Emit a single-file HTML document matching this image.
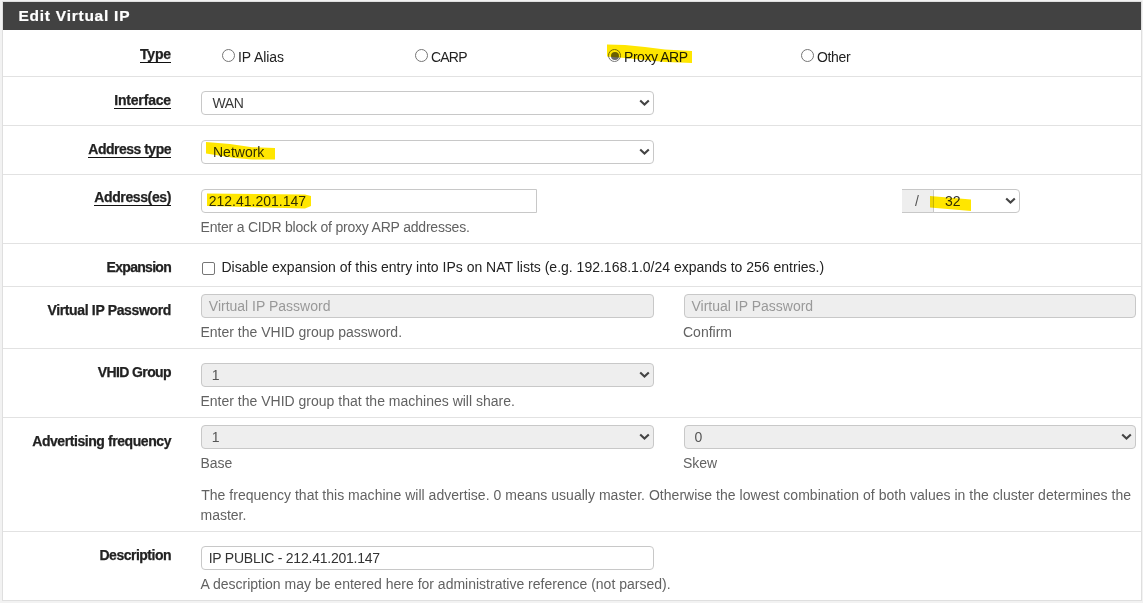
<!DOCTYPE html>
<html><head><meta charset="utf-8"><title>Edit Virtual IP</title>
<style>
html,body{margin:0;padding:0}
body{width:1143px;height:603px;overflow:hidden;background:#f2f2f2;position:relative;font-family:"Liberation Sans", sans-serif}
.t{position:absolute;white-space:nowrap;line-height:20px;font-family:"Liberation Sans", sans-serif}
.b{position:absolute;box-sizing:border-box}
</style></head><body>
<div class="b" style="left:2px;top:1px;width:1140px;height:600px;background:#fff;border:1px solid #dfdfdf"></div>
<div class="b" style="left:3px;top:2px;width:1138px;height:28px;background:#424242"></div>
<div class="t" style="left:18.5px;top:6.03px;font-size:15.5px;font-weight:bold;color:#fff;letter-spacing:0.75px;-webkit-text-stroke:0.2px #fff;">Edit Virtual IP</div>
<div class="b" style="left:3px;top:76px;width:1138px;height:1px;background:#e2e2e2"></div>
<div class="b" style="left:3px;top:125px;width:1138px;height:1px;background:#e2e2e2"></div>
<div class="b" style="left:3px;top:174px;width:1138px;height:1px;background:#e2e2e2"></div>
<div class="b" style="left:3px;top:243px;width:1138px;height:1px;background:#e2e2e2"></div>
<div class="b" style="left:3px;top:286px;width:1138px;height:1px;background:#e2e2e2"></div>
<div class="b" style="left:3px;top:348px;width:1138px;height:1px;background:#e2e2e2"></div>
<div class="b" style="left:3px;top:417px;width:1138px;height:1px;background:#e2e2e2"></div>
<div class="b" style="left:3px;top:531px;width:1138px;height:1px;background:#e2e2e2"></div>
<div class="t" style="left:0;width:171px;text-align:right;top:44.05px;font-size:14px;font-weight:bold;color:#222;letter-spacing:-0.15px;-webkit-text-stroke:0.25px #222"><span style="border-bottom:1px solid #111;padding-bottom:0px">Type</span></div>
<div class="t" style="left:0;width:171px;text-align:right;top:90.45px;font-size:14px;font-weight:bold;color:#222;letter-spacing:-0.17px;-webkit-text-stroke:0.25px #222"><span style="border-bottom:1px solid #111;padding-bottom:0px">Interface</span></div>
<div class="t" style="left:0;width:171px;text-align:right;top:139.15px;font-size:14px;font-weight:bold;color:#222;letter-spacing:-0.5px;-webkit-text-stroke:0.25px #222"><span style="border-bottom:1px solid #111;padding-bottom:0px">Address type</span></div>
<div class="t" style="left:0;width:171px;text-align:right;top:187.45px;font-size:14px;font-weight:bold;color:#222;letter-spacing:-0.38px;-webkit-text-stroke:0.25px #222"><span style="border-bottom:1px solid #111;padding-bottom:0px">Address(es)</span></div>
<div class="t" style="left:0;width:171px;text-align:right;top:257.15px;font-size:14px;font-weight:bold;color:#222;letter-spacing:-0.71px;-webkit-text-stroke:0.25px #222">Expansion</div>
<div class="t" style="left:0;width:171px;text-align:right;top:300.15px;font-size:14px;font-weight:bold;color:#222;letter-spacing:-0.35px;-webkit-text-stroke:0.25px #222">Virtual IP Password</div>
<div class="t" style="left:0;width:171px;text-align:right;top:362.35px;font-size:14px;font-weight:bold;color:#222;letter-spacing:-0.61px;-webkit-text-stroke:0.25px #222">VHID Group</div>
<div class="t" style="left:0;width:171px;text-align:right;top:431.15px;font-size:14px;font-weight:bold;color:#222;letter-spacing:-0.43px;-webkit-text-stroke:0.25px #222">Advertising frequency</div>
<div class="t" style="left:0;width:171px;text-align:right;top:545.05px;font-size:14px;font-weight:bold;color:#222;letter-spacing:-0.5px;-webkit-text-stroke:0.25px #222">Description</div>
<div class="b" style="left:222px;top:49px;width:13px;height:13px;border:1px solid #767676;border-radius:50%;background:#fff"></div>
<div class="t" style="left:238px;top:46.85px;font-size:14px;font-weight:normal;color:#222;letter-spacing:-0.05px;">IP Alias</div>
<div class="b" style="left:415px;top:49px;width:13px;height:13px;border:1px solid #767676;border-radius:50%;background:#fff"></div>
<div class="t" style="left:431px;top:46.85px;font-size:14px;font-weight:normal;color:#222;letter-spacing:-0.8px;">CARP</div>
<div class="b" style="left:608px;top:49px;width:13px;height:13px;border:1px solid #767676;border-radius:50%;background:#fff"></div><div class="b" style="left:610.5px;top:51.5px;width:8px;height:8px;border-radius:50%;background:#6b6b6b"></div>
<div class="t" style="left:624px;top:46.85px;font-size:14px;font-weight:normal;color:#222;letter-spacing:-0.45px;">Proxy ARP</div>
<div class="b" style="left:801px;top:49px;width:13px;height:13px;border:1px solid #767676;border-radius:50%;background:#fff"></div>
<div class="t" style="left:817px;top:46.85px;font-size:14px;font-weight:normal;color:#222;letter-spacing:-0.35px;">Other</div>
<div class="b" style="left:201px;top:91px;width:453px;height:24px;background:#fff;border:1px solid #c8c8c8;border-radius:4px;"></div>
<div class="t" style="left:212.5px;top:92.95px;font-size:14px;font-weight:normal;color:#3a3a3a;letter-spacing:-0.45px;">WAN</div>
<svg class="b" style="left:638.90px;top:98.70px" width="11" height="8" viewBox="0 0 11 8"><path d="M1.2 1.4 L5.5 5.5 L9.8 1.4" fill="none" stroke="#444" stroke-width="2.1" stroke-linecap="butt"/></svg>
<div class="b" style="left:201px;top:140px;width:453px;height:24px;background:#fff;border:1px solid #c8c8c8;border-radius:4px;"></div>
<div class="t" style="left:213px;top:141.85px;font-size:14px;font-weight:normal;color:#333;letter-spacing:0px;">Network</div>
<svg class="b" style="left:638.90px;top:147.70px" width="11" height="8" viewBox="0 0 11 8"><path d="M1.2 1.4 L5.5 5.5 L9.8 1.4" fill="none" stroke="#444" stroke-width="2.1" stroke-linecap="butt"/></svg>
<div class="b" style="left:201px;top:189px;width:336px;height:24px;background:#fff;border:1px solid #c8c8c8;border-radius:4px;border-top-right-radius:0;border-bottom-right-radius:0;"></div>
<div class="t" style="left:208.7px;top:190.95px;font-size:14px;font-weight:normal;color:#333;letter-spacing:0px;">212.41.201.147</div>
<div class="b" style="left:902px;top:189px;width:32px;height:24px;background:#eee;border:1px solid #c8c8c8;border-radius:0px;border-left:none;"></div>
<div class="t" style="left:915px;top:190.65px;font-size:14px;font-weight:normal;color:#555;letter-spacing:0px;">/</div>
<div class="b" style="left:933px;top:189px;width:87px;height:24px;background:#fff;border:1px solid #c8c8c8;border-radius:0px;border-top-right-radius:4px;border-bottom-right-radius:4px;"></div>
<div class="t" style="left:945px;top:190.65px;font-size:14px;font-weight:normal;color:#333;letter-spacing:0px;">32</div>
<svg class="b" style="left:1004.90px;top:196.70px" width="11" height="8" viewBox="0 0 11 8"><path d="M1.2 1.4 L5.5 5.5 L9.8 1.4" fill="none" stroke="#444" stroke-width="2.1" stroke-linecap="butt"/></svg>
<div class="t" style="left:200.5px;top:217.15px;font-size:14px;font-weight:normal;color:#626262;letter-spacing:-0.2px;">Enter a CIDR block of proxy ARP addresses.</div>
<div class="b" style="left:202px;top:262px;width:13px;height:13px;border:1px solid #767676;border-radius:2px;background:#fff"></div>
<div class="t" style="left:221.5px;top:257.05px;font-size:14px;font-weight:normal;color:#222;letter-spacing:0px;">Disable expansion of this entry into IPs on NAT lists (e.g. 192.168.1.0/24 expands to 256 entries.)</div>
<div class="b" style="left:201px;top:294px;width:453px;height:24px;background:#eee;border:1px solid #c8c8c8;border-radius:4px;"></div>
<div class="t" style="left:208.8px;top:295.85px;font-size:14px;font-weight:normal;color:#999;letter-spacing:0px;">Virtual IP Password</div>
<div class="t" style="left:200.5px;top:321.75px;font-size:14px;font-weight:normal;color:#626262;letter-spacing:0px;">Enter the VHID group password.</div>
<div class="b" style="left:684px;top:294px;width:452px;height:24px;background:#eee;border:1px solid #c8c8c8;border-radius:4px;"></div>
<div class="t" style="left:691.5px;top:295.85px;font-size:14px;font-weight:normal;color:#999;letter-spacing:0px;">Virtual IP Password</div>
<div class="t" style="left:683px;top:321.75px;font-size:14px;font-weight:normal;color:#626262;letter-spacing:0px;">Confirm</div>
<div class="b" style="left:201px;top:363px;width:453px;height:24px;background:#eee;border:1px solid #c8c8c8;border-radius:4px;"></div>
<div class="t" style="left:211.7px;top:365.15px;font-size:14px;font-weight:normal;color:#555;letter-spacing:0px;">1</div>
<svg class="b" style="left:638.90px;top:370.70px" width="11" height="8" viewBox="0 0 11 8"><path d="M1.2 1.4 L5.5 5.5 L9.8 1.4" fill="none" stroke="#444" stroke-width="2.1" stroke-linecap="butt"/></svg>
<div class="t" style="left:200.5px;top:390.65px;font-size:14px;font-weight:normal;color:#626262;letter-spacing:0px;">Enter the VHID group that the machines will share.</div>
<div class="b" style="left:201px;top:425px;width:453px;height:24px;background:#eee;border:1px solid #c8c8c8;border-radius:4px;"></div>
<div class="t" style="left:211.7px;top:427.05px;font-size:14px;font-weight:normal;color:#555;letter-spacing:0px;">1</div>
<svg class="b" style="left:638.90px;top:432.70px" width="11" height="8" viewBox="0 0 11 8"><path d="M1.2 1.4 L5.5 5.5 L9.8 1.4" fill="none" stroke="#444" stroke-width="2.1" stroke-linecap="butt"/></svg>
<div class="b" style="left:684px;top:425px;width:452px;height:24px;background:#eee;border:1px solid #c8c8c8;border-radius:4px;"></div>
<div class="t" style="left:694.5px;top:427.05px;font-size:14px;font-weight:normal;color:#555;letter-spacing:0px;">0</div>
<svg class="b" style="left:1120.90px;top:432.70px" width="11" height="8" viewBox="0 0 11 8"><path d="M1.2 1.4 L5.5 5.5 L9.8 1.4" fill="none" stroke="#444" stroke-width="2.1" stroke-linecap="butt"/></svg>
<div class="t" style="left:200.5px;top:452.95px;font-size:14px;font-weight:normal;color:#626262;letter-spacing:0px;">Base</div>
<div class="t" style="left:683px;top:452.95px;font-size:14px;font-weight:normal;color:#626262;letter-spacing:0px;">Skew</div>
<div class="t" style="left:201.2px;top:484.85px;font-size:14px;font-weight:normal;color:#626262;letter-spacing:0.026px;">The frequency that this machine will advertise. 0 means usually master. Otherwise the lowest combination of both values in the cluster determines the</div>
<div class="t" style="left:200.5px;top:505.15px;font-size:14px;font-weight:normal;color:#626262;letter-spacing:0px;">master.</div>
<div class="b" style="left:201px;top:546px;width:453px;height:24px;background:#fff;border:1px solid #c8c8c8;border-radius:4px;"></div>
<div class="t" style="left:208.7px;top:547.75px;font-size:14px;font-weight:normal;color:#333;letter-spacing:-0.23px;">IP PUBLIC - 212.41.201.147</div>
<div class="t" style="left:200.5px;top:574.45px;font-size:14px;font-weight:normal;color:#626262;letter-spacing:0px;">A description may be entered here for administrative reference (not parsed).</div>
<svg class="b" style="left:0;top:0;mix-blend-mode:multiply" width="1143" height="603"><polygon points="607,44.5 625,45 645,47 665,49.5 692,51 692,63 665,62 645,60 625,58 607,56.5" fill="#ffe600"/><polygon points="206,142 230,144 252,147.2 275,148 275,159.4 252,159.5 235,158 206,153.5" fill="#ffe600"/><polygon points="207,193.5 305,194.4 311,196 311,206 305,208.6 207,206" fill="#ffe600"/><polygon points="930,196 971,199.5 971,211 930,207.5" fill="#ffe600"/></svg>
</body></html>
